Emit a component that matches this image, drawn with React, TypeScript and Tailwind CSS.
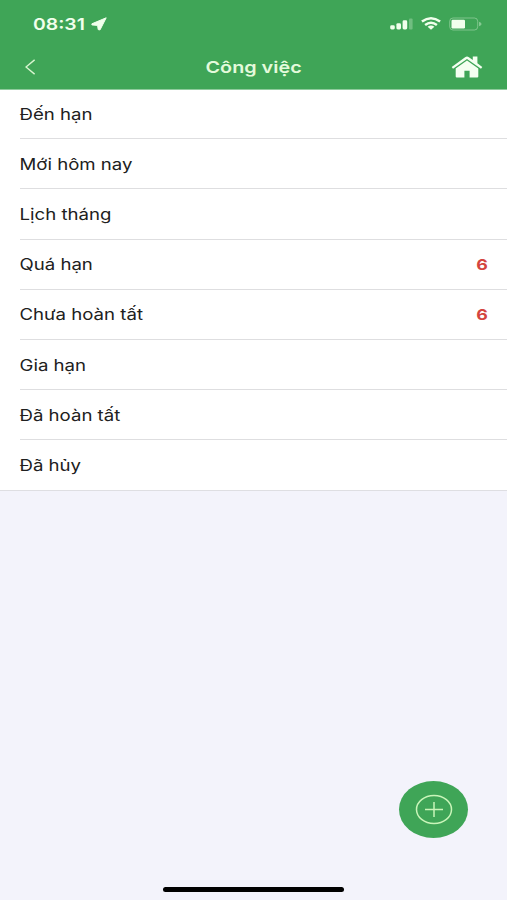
type Task = { label: string; count?: number };

const tasks: Task[] = [
  { label: 'Đến hạn' },
  { label: 'Mới hôm nay' },
  { label: 'Lịch tháng' },
  { label: 'Quá hạn', count: 6 },
  { label: 'Chưa hoàn tất', count: 6 },
  { label: 'Gia hạn' },
  { label: 'Đã hoàn tất' },
  { label: 'Đã hủy' },
];

function StatusBar() {
  return (
    <div className="flex h-[46px] items-center justify-between pt-px pl-[33px] pr-[24px]">
      <div className="flex items-center">
        <span className="w-[53px] whitespace-nowrap">
          <span className="inline-block origin-left scale-x-[1.19] text-[16.3px] leading-5 font-semibold">08:31</span>
        </span>
        <svg width="16" height="14" viewBox="0 0 16 14" className="ml-[5px]" fill="currentColor">
          <path d="M15.2.8 9 12.9 7.2 12.6 6.6 8.4.9 7.9V6.8Z" stroke="currentColor" strokeWidth="1" strokeLinejoin="round" />
        </svg>
      </div>
      <div className="flex items-center">
        <svg width="23" height="12" viewBox="0 0 23 12" fill="currentColor">
          <rect x="0.2" y="7.3" width="4.6" height="4.2" rx="1.4" />
          <rect x="6.4" y="5.2" width="4.6" height="6.3" rx="1.4" />
          <rect x="12.6" y="2.3" width="4.6" height="9.2" rx="1.4" />
          <rect x="19" y="0.5" width="3.6" height="11" rx="1" opacity=".28" />
        </svg>
        <svg width="20" height="13" viewBox="0 0 20 13" className="ml-[8px]" fill="none" stroke="currentColor" strokeWidth="2.5">
          <path d="M.9 4.6Q10-2 19.1 4.6" />
          <path d="M4.1 8Q10 3.4 15.9 8" />
          <path d="M6.6 9.8Q10 7.2 13.4 9.8L10 12.7Z" fill="currentColor" stroke="none" />
        </svg>
        <svg width="34" height="14" viewBox="0 0 34 14" className="ml-[8px]" fill="none">
          <rect x=".7" y="1" width="28" height="12" rx="3.3" stroke="currentColor" opacity=".35" />
          <rect x="2.5" y="2.8" width="13.5" height="8.6" rx="1.2" fill="currentColor" />
          <path d="M30 4.7V9.3Q32.6 8.3 32.6 7T30 4.7Z" fill="currentColor" opacity=".4" />
        </svg>
      </div>
    </div>
  );
}

function TitleBar() {
  return (
    <div className="grid h-[41px] grid-cols-[80px_1fr_80px] items-center">
      <svg width="10" height="16" viewBox="0 0 10 16" className="ml-[25px]" fill="none" stroke="#d8f5cf" strokeWidth="1.4">
        <path d="M9.6.8 1 8l8.6 7.2" />
      </svg>
      <h1 className="text-center whitespace-nowrap">
        <span className="inline-block translate-x-[0.5px] scale-x-[1.2] text-[16.5px] leading-5 font-semibold text-[#e4fadb]">Công việc</span>
      </h1>
      <svg width="32" height="22" viewBox="0 0 32 22" className="ml-[24px]" fill="#f4fff1">
        <path d="M.7 11.1 14.1 1.2Q16 0 17.9 1.2L21.8 4.1V.6H26.4V7.3L31.3 11.1 30 12.7 16 3 2 12.7Z" />
        <path d="M4.7 12.5 16 4.4 27.3 12.5V20.5Q27.3 21.4 26.2 21.4H18.6V14.7H13.4V21.4H5.8Q4.7 21.4 4.7 20.5Z" />
      </svg>
    </div>
  );
}

function TaskRow({ task, last }: { task: Task; last: boolean }) {
  return (
    <li className={last ? 'h-[50.2px] border-b border-[#dedee2]' : 'ml-5 h-[50.2px] border-b border-[#dedee0] first:h-[49.2px]'}>
      <div className={last ? 'ml-5 flex h-full items-center justify-between pt-[2px] pr-[19px]' : 'flex h-full items-center justify-between pt-[2px] pr-[19px]'}>
        <span className="inline-block origin-left -translate-x-[0.5px] scale-x-[1.2] text-[15.5px] leading-5 whitespace-nowrap text-[#202020]">{task.label}</span>
        {task.count !== undefined && (
          <span className="inline-block origin-right scale-x-[1.19] text-[15px] leading-5 font-bold text-[#d4453e]">{task.count}</span>
        )}
      </div>
    </li>
  );
}

export default function App() {
  return (
    <div className="relative flex h-[900px] w-[507px] flex-col overflow-hidden bg-[#f3f3fb] font-['Inter','Liberation_Sans',sans-serif]">
      <header className="h-[89px] bg-[#3fa557] text-[#f1ffec]">
        <StatusBar />
        <TitleBar />
      </header>
      <ul className="border-t border-[#8fcb9d] bg-white">
        {tasks.map((task, i) => (
          <TaskRow key={task.label} task={task} last={i === tasks.length - 1} />
        ))}
      </ul>
      <button aria-label="+" className="absolute top-[781px] left-[399px] flex h-[57px] w-[69px] items-center justify-center rounded-[50%] bg-[#3fa557]">
        <svg width="38" height="31" viewBox="0 0 38 31" fill="none" stroke="#c9f5b9" strokeWidth="1.5">
          <ellipse cx="19" cy="15.5" rx="17.5" ry="14" />
          <path d="M10 15.5H28M19 8V23" />
        </svg>
      </button>
      <div className="mt-auto mb-2 ml-[163px] h-[5px] w-[181px] rounded-full bg-black" />
    </div>
  );
}
